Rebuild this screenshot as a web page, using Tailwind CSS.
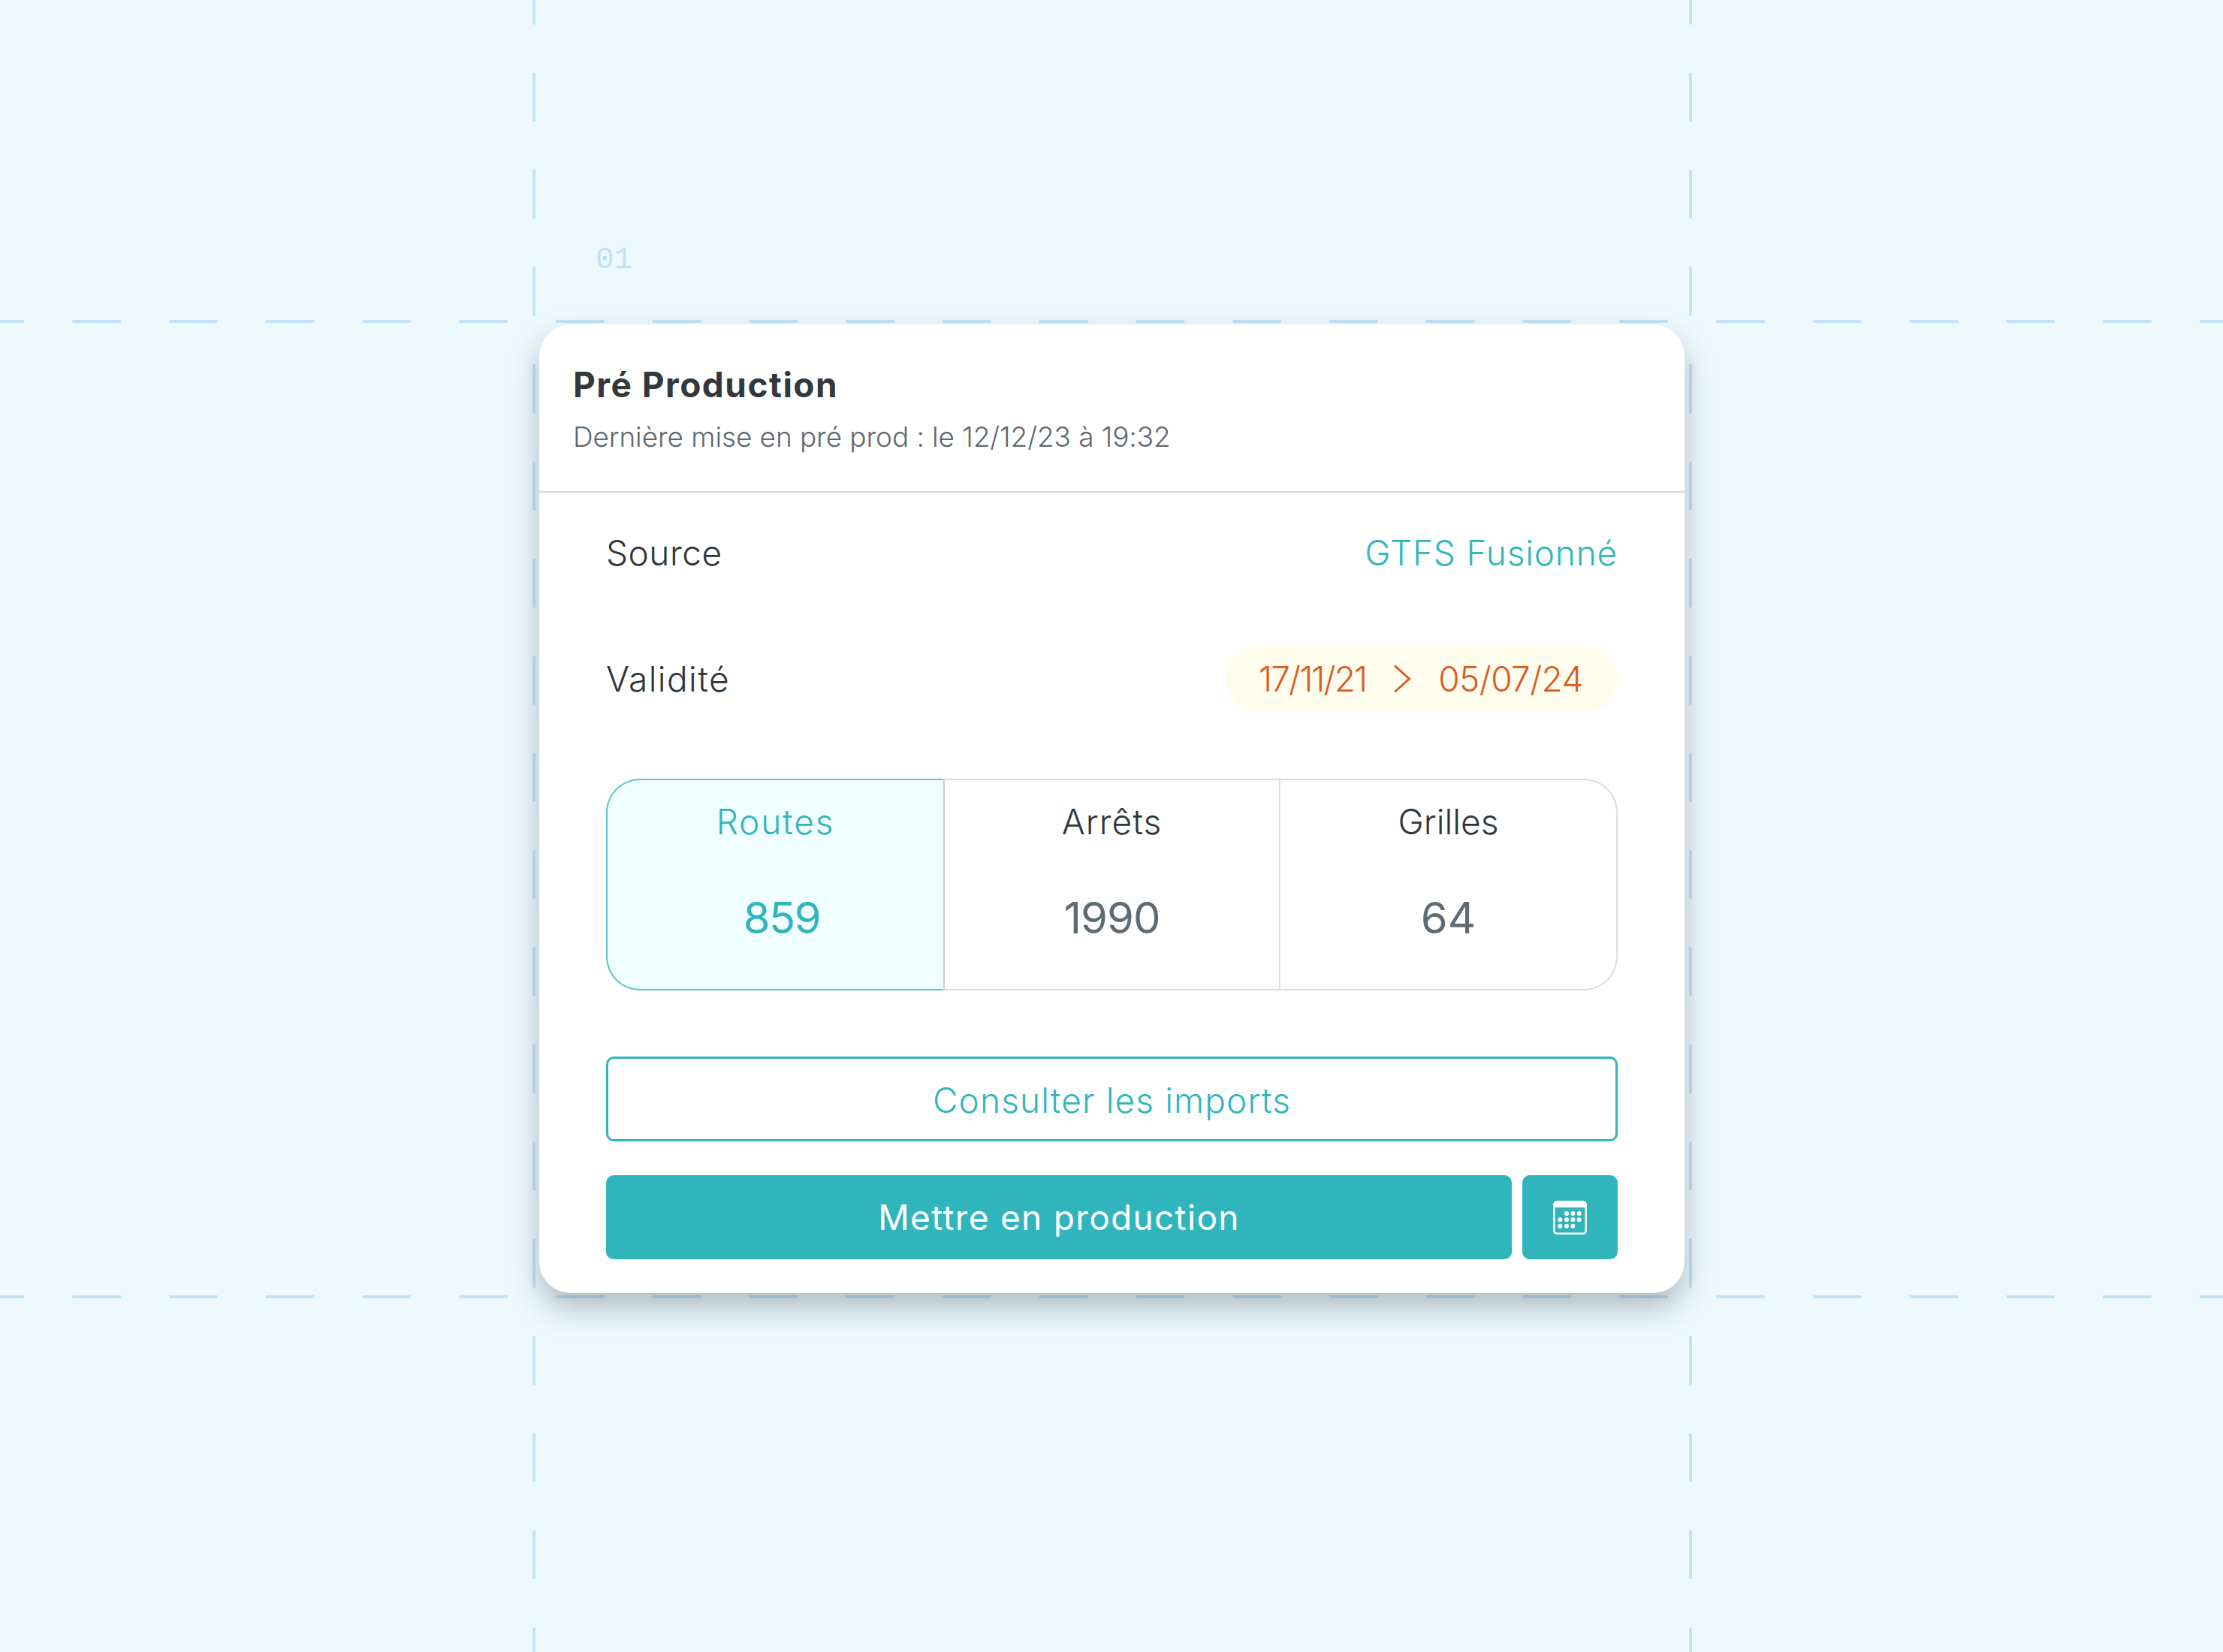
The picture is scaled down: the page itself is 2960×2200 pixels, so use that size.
<!DOCTYPE html>
<html lang="fr">
<head>
  <meta charset="UTF-8">
  <title>Pré Production</title>
  <script src="https://cdn.jsdelivr.net/npm/@tailwindcss/browser@4"></script>
</head>
<body class="bg-[#edf9fe] font-['Inter',sans-serif]">
  <div class="relative w-[2960px] h-[2200px] overflow-hidden pl-[718px] pt-[325px]">
    <!-- Guide lines -->
    <svg class="absolute inset-0" width="2960" height="2200" fill="none" stroke="#c2e2fa" stroke-width="4">
      <path d="M0 428H2960M0 1727H2960" stroke-dasharray="64.4 64.36" stroke-dashoffset="32.4"/>
      <path d="M711 0V2200M2251 0V2200" stroke-dasharray="65 64.4" stroke-dashoffset="32.4"/>
    </svg>

    <div class="relative w-[1525px]">
      <p class="h-[107px] pl-[75px] font-['Liberation_Mono',monospace] text-[41px] leading-[42px] text-[#bfe0f9]">01</p>

      <!-- Card -->
      <div class="h-[1290px] bg-white rounded-[42px] shadow-[0_20px_40px_rgba(30,50,55,0.3)] overflow-hidden">
        <div class="h-[224px] px-[45px] pt-[52px] border-b-2 border-[#d9d9d9]">
          <h1 class="text-[46px] leading-[56px] font-bold tracking-[1.5px] text-[#33383d]">Pré Production</h1>
          <p class="mt-[20px] text-[37px] leading-[44px] font-light tracking-[-0.1px] text-[#5f6870]">Dernière mise en pré prod : le 12/12/23 à 19:32</p>
        </div>

        <div class="pl-[89px] pr-[89px] pt-[35px]">
          <div class="h-[90px] flex items-center justify-between text-[46px] font-[350] text-[#2f363a]">
            <span class="tracking-[0.5px]">Source</span>
            <span class="tracking-[0.8px] text-[#31b5bd]">GTFS Fusionné</span>
          </div>
          <div class="mt-[78px] h-[90px] flex items-center justify-between text-[46px] font-[350] text-[#2f363a]">
            <span class="tracking-[1.4px]">Validité</span>
            <span class="h-[90px] w-[522px] pl-[44px] rounded-full bg-[#fffeee] flex items-center gap-[36px] text-[#dc5b1f]">
              <span class="tracking-[-1.9px]">17/11/21</span>
              <svg width="24" height="38" viewBox="0 0 24 38" fill="none" stroke="#dc5b1f" stroke-width="3"><path d="M2 1.5L21.5 19L2 36.5"/></svg>
              <span class="tracking-[-0.6px]">05/07/24</span>
            </span>
          </div>

          <!-- Stats -->
          <div class="mt-[88px] grid grid-cols-3 h-[282px] text-center">
            <div class="border-2 border-r-0 border-[#5fc6cc] rounded-l-[45px] bg-[#f1feff] text-[#31b5bd]">
              <p class="mt-[25px] text-[46px] leading-[60px] font-[350] tracking-[1.8px]">Routes</p>
              <p class="mt-[63px] pl-[17px] text-[58px] leading-[70px] font-normal tracking-[-1.5px]">859</p>
            </div>
            <div class="border-2 border-[#dcdcdc] border-l-[#cfcfcf] text-[#2f363a]">
              <p class="mt-[25px] text-[46px] leading-[60px] font-[350] tracking-[1px]">Arrêts</p>
              <p class="mt-[63px] text-[58px] leading-[70px] font-normal tracking-[-1px] text-[#5f6b73]">1990</p>
            </div>
            <div class="border-2 border-l-0 border-[#dcdcdc] rounded-r-[45px] text-[#2f363a]">
              <p class="mt-[25px] text-[46px] leading-[60px] font-[350]">Grilles</p>
              <p class="mt-[63px] text-[58px] leading-[70px] font-normal text-[#5f6b73]">64</p>
            </div>
          </div>

          <button class="mt-[88px] w-full h-[113px] pt-[3px] rounded-[10px] border-[3px] border-[#31b5bd] text-[46px] font-[350] tracking-[1.1px] text-[#31b5bd]">Consulter les imports</button>

          <div class="mt-[45px] flex gap-[14px] h-[112px]">
            <button class="w-[1206px] rounded-[10px] bg-[#31b5bd] text-[46px] tracking-[1.3px] text-white">Mettre en production</button>
            <button class="w-[127px] rounded-[10px] bg-[#31b5bd] flex items-center justify-center">
              <svg width="45" height="45" viewBox="0 0 45 45" fill="#fff">
                <rect x="1.25" y="1.25" width="42.5" height="42.5" rx="4" fill="none" stroke="#fff" stroke-width="2.5"/>
                <path d="M1 5a4 4 0 0 1 4-4h35a4 4 0 0 1 4 4v4H1z"/>
                <circle cx="18" cy="17" r="3"/><circle cx="26.3" cy="17" r="3"/><circle cx="34.7" cy="17" r="3"/>
                <circle cx="9.3" cy="25.3" r="3"/><circle cx="18" cy="25.3" r="3"/><circle cx="26.3" cy="25.3" r="3"/><circle cx="34.7" cy="25.3" r="3"/>
                <circle cx="9.3" cy="33.7" r="3"/><circle cx="18" cy="33.7" r="3"/><circle cx="26.3" cy="33.7" r="3"/>
              </svg>
            </button>
          </div>
        </div>
      </div>
    </div>
  </div>
</body>
</html>
